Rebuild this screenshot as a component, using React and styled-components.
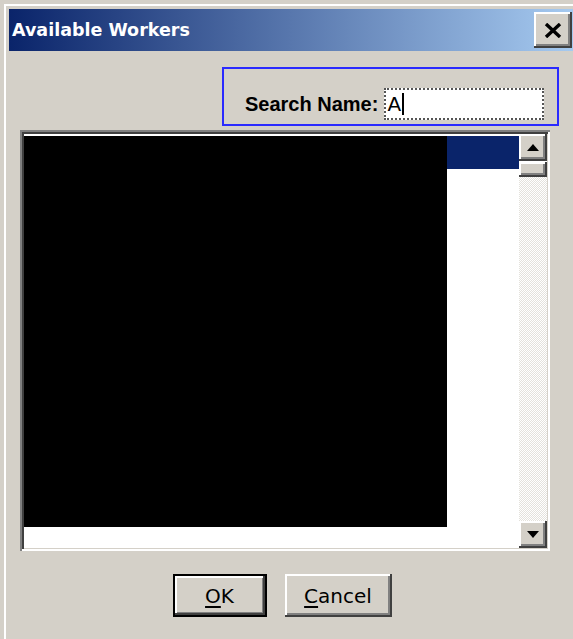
import styled, { createGlobalStyle, css } from "styled-components";

const GlobalStyle = createGlobalStyle`
  html, body {
    margin: 0;
    padding: 0;
    background: #d4d0c8;
  }
  body {
    font-family: "DejaVu Sans", "Liberation Sans", sans-serif;
  }
`;

// classic 3D bevel used by buttons and scroll arrows
const raised = css`
  background: #d4d0c8;
  box-shadow: inset -2px -2px 0 #404040, inset 2px 2px 0 #ffffff,
    inset -4px -4px 0 #808080, inset 4px 4px 0 #d4d0c8;
`;

const Window = styled.div`
  width: 573px;
  height: 639px;
  box-sizing: border-box;
  padding: 9px 0 0 9px;
  box-shadow: inset 4px 4px 0 #d4d0c8, inset 6px 6px 0 #ffffff;
  display: flex;
  flex-direction: column;
  overflow: hidden;
`;

const TitleBar = styled.div`
  height: 42px;
  display: flex;
  align-items: center;
  justify-content: space-between;
  padding: 0 1px 0 3px;
  background: linear-gradient(to right, #0a246a, #a6caf0);
`;

const Title = styled.span`
  color: #fff;
  font-weight: bold;
  font-size: 17.5px;
`;

const CloseButton = styled.div`
  ${raised};
  width: 38px;
  height: 36px;
  display: flex;
  align-items: center;
  justify-content: center;
`;

const Body = styled.div`
  padding: 16px 0 0 11px;
  display: flex;
  flex-direction: column;
`;

const SearchRow = styled.div`
  display: flex;
  justify-content: flex-end;
  padding-right: 14px;
`;

const SearchGroup = styled.div`
  width: 337px;
  height: 59px;
  box-sizing: border-box;
  border: 2px solid #2a2aff;
  display: flex;
  align-items: center;
  padding: 15px 0 0 21px;
`;

const Label = styled.label`
  font-family: "Liberation Sans", Arial, sans-serif;
  font-weight: bold;
  font-size: 20px;
  color: #000;
`;

const SearchInput = styled.div`
  margin-left: 6px;
  width: 160px;
  height: 32px;
  box-sizing: border-box;
  background: #fff;
  border: 2px dotted #555;
  display: flex;
  align-items: center;
  padding-left: 1px;
  font-size: 20px;
  color: #000;
`;

const Caret = styled.span`
  width: 2px;
  height: 22px;
  background: #000;
  margin-left: 1px;
`;

const ListBox = styled.div`
  margin-top: 4px;
  width: 530px;
  height: 421px;
  box-sizing: border-box;
  padding: 4px 3px 3px 4px;
  background: #fff;
  box-shadow: inset 2px 2px 0 #808080, inset -2px -2px 0 #ffffff,
    inset 4px 4px 0 #404040, inset -3px -3px 0 #d4d0c8;
  display: flex;
`;

const Items = styled.div`
  flex: 1;
  position: relative;
  background: #fff;
  padding-top: 2px;
`;

const Row = styled.div`
  height: 33px;
  background: ${(p) => (p.$selected ? "#0a246a" : "#fff")};
`;

const Redacted = styled.div`
  position: absolute;
  left: 0;
  top: 2px;
  width: 423px;
  height: 391px;
  background: #000;
`;

const ScrollBar = styled.div`
  width: 28px;
  display: flex;
  flex-direction: column;
`;

const ScrollArrow = styled.div`
  ${raised};
  height: 27px;
  display: flex;
  align-items: center;
  justify-content: center;
`;

const Thumb = styled.div`
  ${raised};
  height: 15px;
  margin-top: 1px;
`;

const Track = styled.div`
  flex: 1;
  background: repeating-conic-gradient(#e4e2dc 0 25%, #ffffff 0 50%) 0 0 / 2px 2px;
`;

const Buttons = styled.div`
  width: 530px;
  margin-top: 23px;
  display: flex;
  justify-content: center;
  gap: 18px;
  padding-right: 6px;
  box-sizing: border-box;
`;

const Button = styled.div`
  ${raised};
  width: ${(p) => p.$width}px;
  height: 43px;
  box-sizing: border-box;
  display: flex;
  align-items: center;
  justify-content: center;
  font-size: 20px;
  color: #000;
  ${(p) =>
    p.$default &&
    css`
      box-shadow: inset 0 0 0 2px #000, inset -4px -4px 0 #404040,
        inset 4px 4px 0 #ffffff, inset -5px -5px 0 #808080;
    `}
  u {
    text-underline-offset: 3px;
  }
`;

const Arrow = ({ up }) => (
  <svg width="12" height="7" viewBox="0 0 12 7">
    <path d={up ? "M0 7 L6 0 L12 7 Z" : "M0 0 L6 7 L12 0 Z"} fill="#000" />
  </svg>
);

export default function App() {
  return (
    <>
      <GlobalStyle />
      <Window>
        <TitleBar>
          <Title>Available Workers</Title>
          <CloseButton>
            <svg width="18" height="15" viewBox="0 0 18 15">
              <path d="M2 1 L16 14 M16 1 L2 14" stroke="#000" strokeWidth="3.4" />
            </svg>
          </CloseButton>
        </TitleBar>
        <Body>
          <SearchRow>
            <SearchGroup>
              <Label>Search Name:</Label>
              <SearchInput>
                A<Caret />
              </SearchInput>
            </SearchGroup>
          </SearchRow>
          <ListBox>
            <Items>
              <Row $selected />
              <Redacted />
            </Items>
            <ScrollBar>
              <ScrollArrow>
                <Arrow up />
              </ScrollArrow>
              <Thumb />
              <Track />
              <ScrollArrow>
                <Arrow />
              </ScrollArrow>
            </ScrollBar>
          </ListBox>
          <Buttons>
            <Button $width={94} $default>
              <span>
                <u>O</u>K
              </span>
            </Button>
            <Button $width={107}>
              <span>
                <u>C</u>ancel
              </span>
            </Button>
          </Buttons>
        </Body>
      </Window>
    </>
  );
}
